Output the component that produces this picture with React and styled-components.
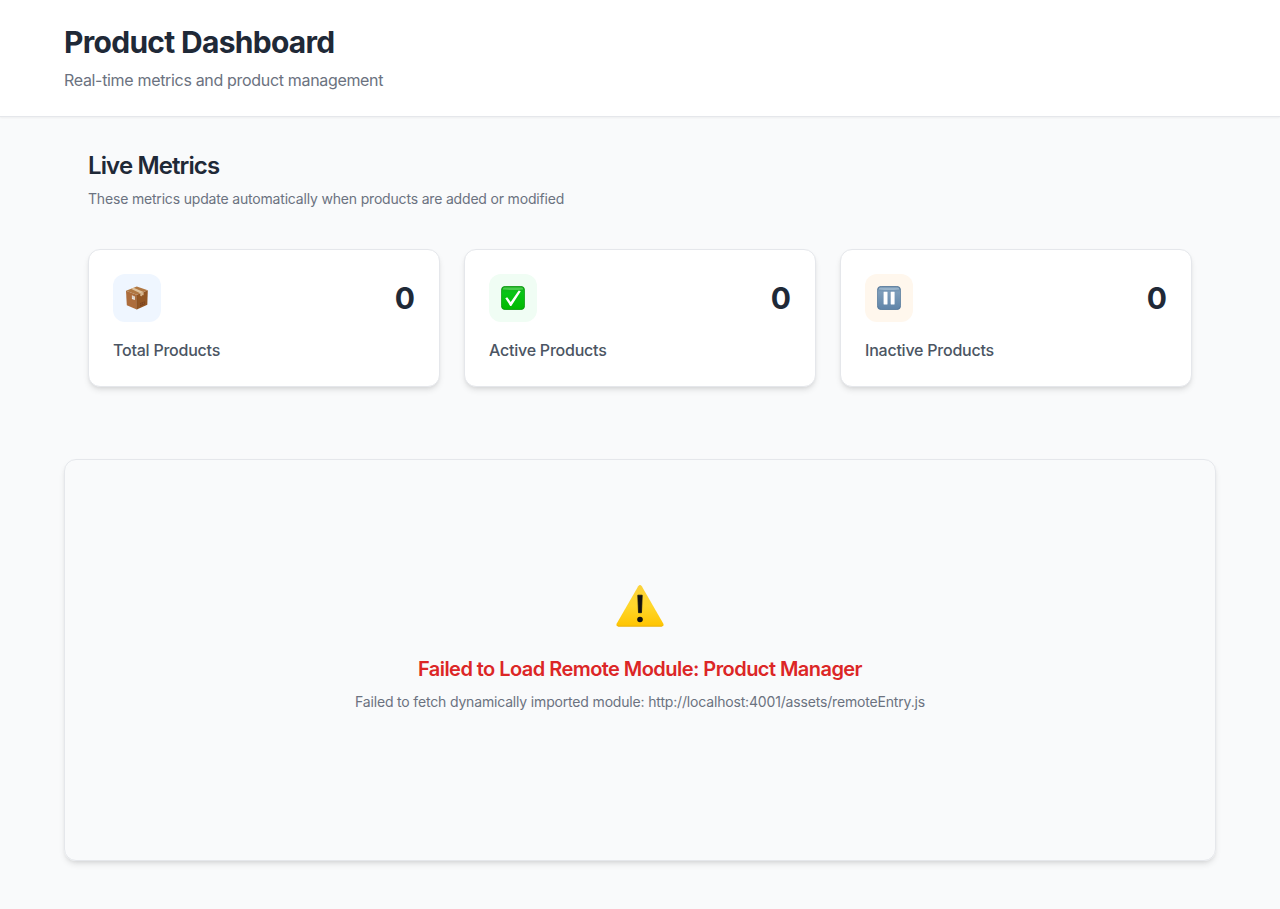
import React from "react";
import styled, { createGlobalStyle } from "styled-components";

const GlobalStyle = createGlobalStyle`
  *, *::before, *::after { box-sizing: border-box; }
  body {
    margin: 0;
    background: #f9fafb;
    color: #1f2937;
    font-family: Inter, "Liberation Sans", sans-serif;
    -webkit-font-smoothing: antialiased;
  }
  h1, h2, h3, p { margin: 0; }
  svg { display: block; }
`;

const Page = styled.div`
  min-height: 909px;
  background: #f9fafb;
`;

const Header = styled.header`
  padding: 24px 64px;
  background: #fff;
  border-bottom: 1px solid #e5e7eb;
  box-shadow: 0 1px 2px rgba(0, 0, 0, 0.05);
`;

const Title = styled.h1`
  font-size: 30px;
  line-height: 36px;
  font-weight: 700;
  letter-spacing: -0.71px;
`;

const Subtitle = styled.p`
  margin-top: 8px;
  font-size: 16px;
  line-height: 24px;
  color: #6b7280;
  letter-spacing: -0.325px;
`;

const Main = styled.main`
  padding: 33px 64px 48px;
`;

const Metrics = styled.section`
  padding: 0 24px;
`;

const SectionTitle = styled.h2`
  font-size: 24px;
  line-height: 32px;
  font-weight: 600;
  letter-spacing: -0.87px;
`;

const SectionText = styled.p`
  margin-top: 7px;
  font-size: 14px;
  line-height: 20px;
  color: #6b7280;
  letter-spacing: -0.18px;
`;

const CardGrid = styled.div`
  display: grid;
  grid-template-columns: repeat(3, 1fr);
  gap: 24px;
  margin-top: 40px;
`;

const Card = styled.article`
  padding: 24px;
  background: #fff;
  border: 1px solid #e5e7eb;
  border-radius: 12px;
  box-shadow: 0 4px 6px -1px rgba(0, 0, 0, 0.1), 0 2px 4px -2px rgba(0, 0, 0, 0.1);
`;

const CardTop = styled.div`
  display: flex;
  align-items: center;
  justify-content: space-between;
`;

const IconTile = styled.div`
  display: flex;
  align-items: center;
  justify-content: center;
  width: 48px;
  height: 48px;
  border-radius: 12px;
  background: ${(p) => p.$tint};
`;

const Value = styled.span`
  font-size: 30px;
  line-height: 36px;
  font-weight: 700;
`;

const CardLabel = styled.p`
  margin-top: 16px;
  font-size: 16px;
  line-height: 24px;
  font-weight: 500;
  color: #4b5563;
  letter-spacing: -0.23px;
`;

const ErrorPanel = styled.section`
  display: flex;
  flex-direction: column;
  align-items: center;
  height: 402px;
  margin-top: 72px;
  padding-top: 123px;
  border: 1px solid #e5e7eb;
  border-radius: 12px;
  box-shadow: 0 4px 6px -1px rgba(0, 0, 0, 0.1), 0 2px 4px -2px rgba(0, 0, 0, 0.1);
`;

const ErrorTitle = styled.h3`
  margin-top: 24px;
  font-size: 20px;
  line-height: 28px;
  font-weight: 600;
  color: #dc2626;
  letter-spacing: -0.55px;
`;

const ErrorText = styled.p`
  margin-top: 9px;
  font-size: 14px;
  line-height: 20px;
  color: #6b7280;
  letter-spacing: -0.17px;
`;

const BoxIcon = () => (
  <svg width="24" height="24" viewBox="0 0 24 24">
    <path d="M1 4.7 11.8 8.7 11.8 23.5 1.8 19.2Z" fill="#ad6d3c" />
    <path d="M11.8 8.7 22.8 4.2 22.3 18.7 11.8 23.5Z" fill="#925624" />
    <path d="M1 4.7 11.8.5 22.8 4.2 11.8 8.7Z" fill="#b07742" />
    <path d="M5.9 2.8 8.6 1.8 18.6 5.9 15.3 7.3Z" fill="#dfc29d" />
    <path d="M15.3 7.3 18.6 5.9V9.3L17.6 9.1 16.7 10.2 15.3 10.1Z" fill="#d5b48c" />
    <path d="M6.9 9.3 9.9 10.4V14.1L6.9 12.9Z" fill="#eeeae5" />
    <path d="m7.4 10.3 1.9.7m-1.9.5 1.9.7" stroke="#b8a594" strokeWidth=".5" />
    <path d="m15 17.3 4.8-2v2.9L15 20.3Z" fill="#7b431d" />
    <path d="m15.6 18.4 1.2-.5m1-.4 1.3-.6" stroke="#a86b3d" strokeWidth=".7" />
    <path d="M11.8 8.8V23.3" stroke="#82491f" strokeWidth=".4" />
  </svg>
);

const CheckIcon = () => (
  <svg width="24" height="24" viewBox="0 0 24 24">
    <defs>
      <linearGradient id="check-fill" x2="0" y2="1">
        <stop stopColor="#13ad18" />
        <stop offset=".3" stopColor="#07c516" />
        <stop offset="1" stopColor="#00b900" />
      </linearGradient>
    </defs>
    <rect x=".35" y=".35" width="23.3" height="23.3" rx="4" fill="url(#check-fill)" stroke="#078c0b" strokeWidth=".7" />
    <path d="M3 1.5H21Q22 1.6 22.2 3.5 12 4.7 1.8 3.5 2 1.6 3 1.5Z" fill="#6fda70" opacity=".6" />
    <path d="M4.3 12.3 6.2 11.2 9.7 16.1 17.7 4.6 19.8 5.2 10.3 19.9H9.2Z" fill="#fff" />
  </svg>
);

const PauseIcon = () => (
  <svg width="24" height="24" viewBox="0 0 24 24">
    <defs>
      <linearGradient id="pause-fill" x2="0" y2="1">
        <stop stopColor="#6587a7" />
        <stop offset=".25" stopColor="#7d9dba" />
        <stop offset="1" stopColor="#5f84a8" />
      </linearGradient>
    </defs>
    <rect x=".35" y=".35" width="23.3" height="23.3" rx="4" fill="url(#pause-fill)" stroke="#4b7093" strokeWidth=".7" />
    <path d="M3 1.5H21Q22 1.6 22.2 3.5 12 4.7 1.8 3.5 2 1.6 3 1.5Z" fill="#b6cbdc" opacity=".6" />
    <rect x="6.6" y="5.8" width="3.9" height="12.6" rx=".3" fill="#fff" />
    <rect x="13.7" y="5.8" width="3.9" height="12.6" rx=".3" fill="#fff" />
  </svg>
);

const WarningIcon = () => (
  <svg width="48" height="48" viewBox="0 0 48 48">
    <defs>
      <linearGradient id="warning-fill" x2="0" y2="1">
        <stop stopColor="#fbd13a" />
        <stop offset=".5" stopColor="#ffd72b" />
        <stop offset="1" stopColor="#ffc400" />
      </linearGradient>
    </defs>
    <path d="M22.2 3.2Q24 .7 25.8 3.2L47.1 40.2Q48.7 43.3 45.6 43.6H2.4Q-.7 43.3.9 40.2Z" fill="url(#warning-fill)" />
    <path d="M1.4 42.4Q1.8 43.2 2.5 43.2H45.5Q46.2 43.2 46.6 42.4" fill="none" stroke="#e5ad14" strokeWidth=".8" />
    <path d="M21.8 12.2H26.2L25.5 29.7H22.5Z" fill="#111" stroke="#111" strokeWidth=".8" strokeLinejoin="round" />
    <circle cx="24" cy="36.5" r="2.8" fill="#111" />
  </svg>
);

const metrics = [
  { label: "Total Products", value: 0, tint: "#eff6ff", Icon: BoxIcon },
  { label: "Active Products", value: 0, tint: "#f0fdf4", Icon: CheckIcon },
  { label: "Inactive Products", value: 0, tint: "#fff7ed", Icon: PauseIcon },
];

export default function App() {
  return (
    <Page>
      <GlobalStyle />
      <Header>
        <Title>Product Dashboard</Title>
        <Subtitle>Real-time metrics and product management</Subtitle>
      </Header>
      <Main>
        <Metrics>
          <SectionTitle>Live Metrics</SectionTitle>
          <SectionText>These metrics update automatically when products are added or modified</SectionText>
          <CardGrid>
            {metrics.map(({ label, value, tint, Icon }) => (
              <Card key={label}>
                <CardTop>
                  <IconTile $tint={tint}>
                    <Icon />
                  </IconTile>
                  <Value>{value}</Value>
                </CardTop>
                <CardLabel>{label}</CardLabel>
              </Card>
            ))}
          </CardGrid>
        </Metrics>
        <ErrorPanel>
          <WarningIcon />
          <ErrorTitle>Failed to Load Remote Module: Product Manager</ErrorTitle>
          <ErrorText>Failed to fetch dynamically imported module: http://localhost:4001/assets/remoteEntry.js</ErrorText>
        </ErrorPanel>
      </Main>
    </Page>
  );
}
